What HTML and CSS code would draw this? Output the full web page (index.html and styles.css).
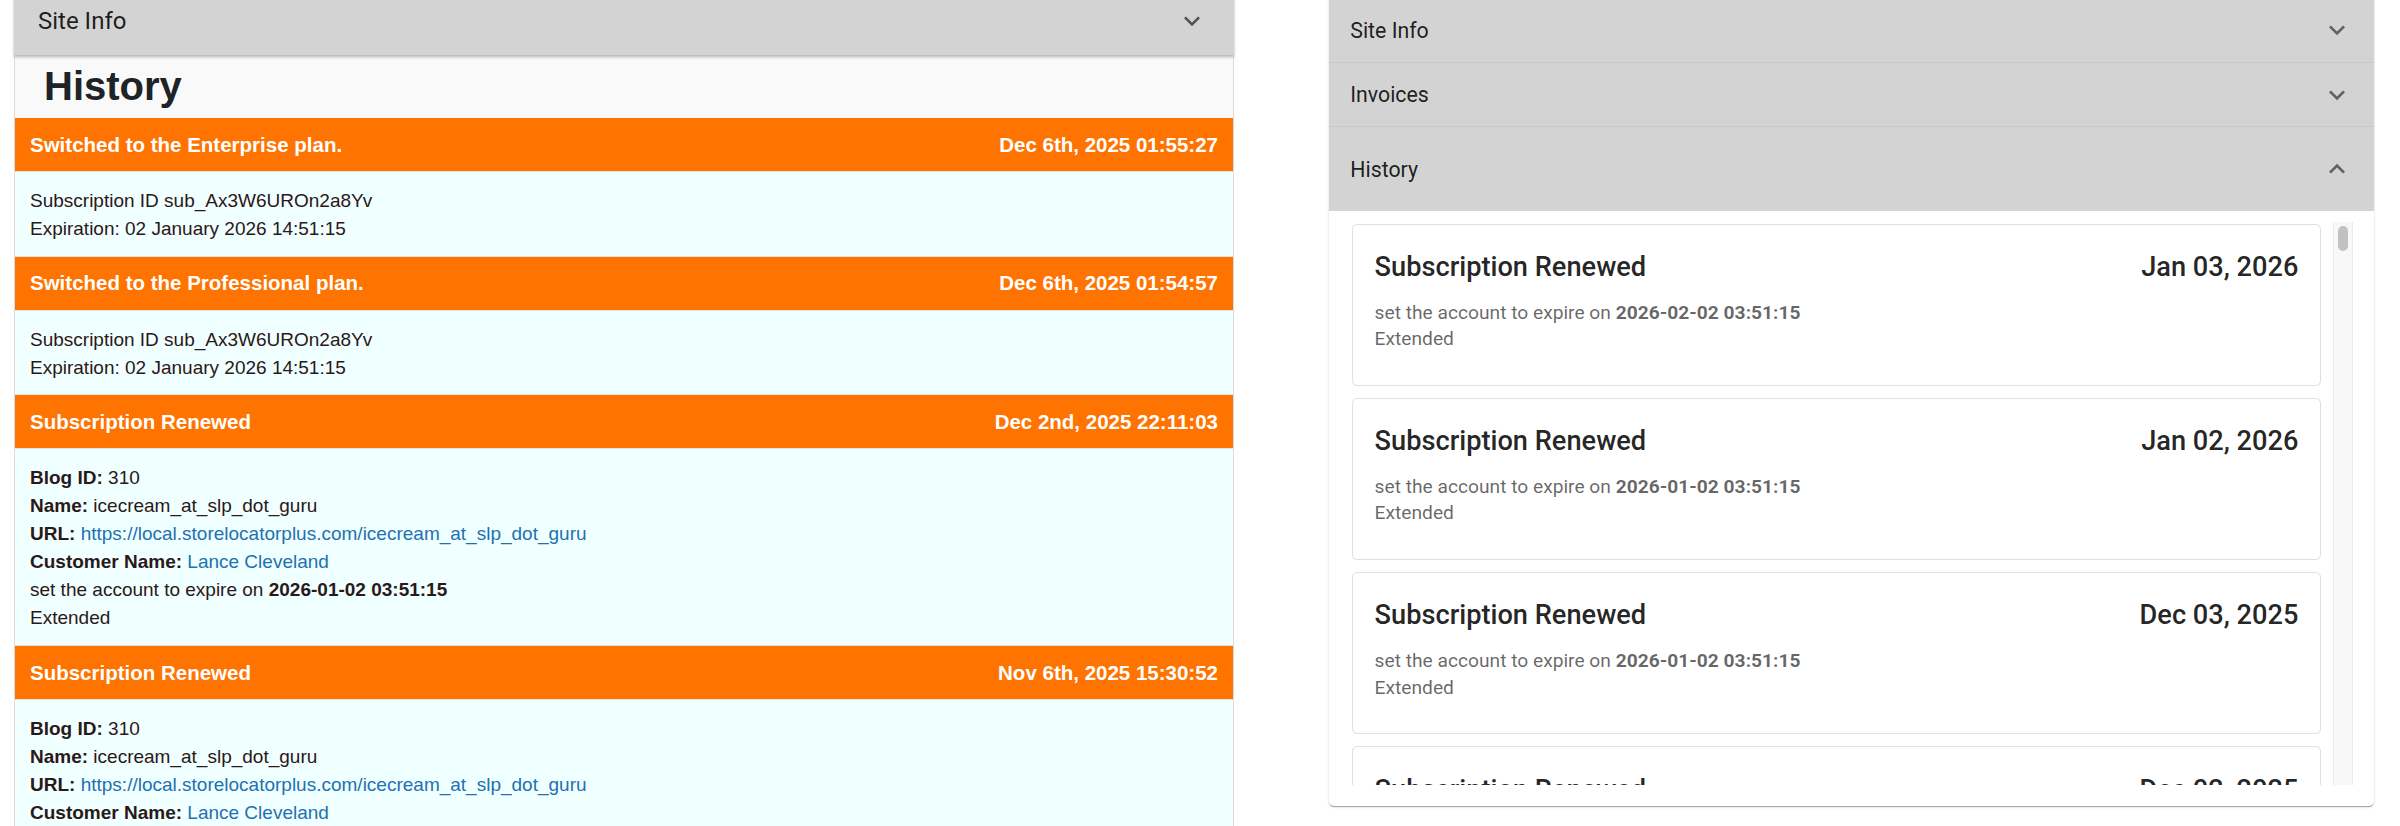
FILE: index.html
```html
<!DOCTYPE html>
<html lang="en">
<head>
<meta charset="utf-8">
<title>Subscription history</title>
<link rel="stylesheet" href="styles.css">
</head>
<body>
<div class="page">
  <section class="legacy">
    <div class="legacy-head">
      <span>Site Info</span>
      <svg class="chev" viewBox="0 0 24 24"><path d="M16.59 8.59 12 13.17 7.41 8.59 6 10l6 6 6-6z"/></svg>
    </div>
    <div class="legacy-body">
      <h1 class="legacy-title">History</h1>

      <div class="entry-head"><span>Switched to the Enterprise plan.</span><span>Dec 6th, 2025 01:55:27</span></div>
      <div class="entry-body">
        <div>Subscription ID sub_Ax3W6UROn2a8Yv</div>
        <div>Expiration: 02 January 2026 14:51:15</div>
      </div>

      <div class="entry-head"><span>Switched to the Professional plan.</span><span>Dec 6th, 2025 01:54:57</span></div>
      <div class="entry-body">
        <div>Subscription ID sub_Ax3W6UROn2a8Yv</div>
        <div>Expiration: 02 January 2026 14:51:15</div>
      </div>

      <div class="entry-head"><span>Subscription Renewed</span><span>Dec 2nd, 2025 22:11:03</span></div>
      <div class="entry-body">
        <div><b>Blog ID:</b> 310</div>
        <div><b>Name:</b> icecream_at_slp_dot_guru</div>
        <div><b>URL:</b> <a href="#">https://local.storelocatorplus.com/icecream_at_slp_dot_guru</a></div>
        <div><b>Customer Name:</b> <a href="#">Lance Cleveland</a></div>
        <div>set the account to expire on <b>2026-01-02 03:51:15</b></div>
        <div>Extended</div>
      </div>

      <div class="entry-head"><span>Subscription Renewed</span><span>Nov 6th, 2025 15:30:52</span></div>
      <div class="entry-body">
        <div><b>Blog ID:</b> 310</div>
        <div><b>Name:</b> icecream_at_slp_dot_guru</div>
        <div><b>URL:</b> <a href="#">https://local.storelocatorplus.com/icecream_at_slp_dot_guru</a></div>
        <div><b>Customer Name:</b> <a href="#">Lance Cleveland</a></div>
      </div>
    </div>
  </section>

  <section class="modern">
    <div class="acc">
      <div class="acc-sum"><span>Site Info</span><svg class="acc-chev" viewBox="0 0 24 24"><path d="M16.59 8.59 12 13.17 7.41 8.59 6 10l6 6 6-6z"/></svg></div>
    </div>
    <div class="acc">
      <div class="acc-sum"><span>Invoices</span><svg class="acc-chev" viewBox="0 0 24 24"><path d="M16.59 8.59 12 13.17 7.41 8.59 6 10l6 6 6-6z"/></svg></div>
    </div>
    <div class="acc acc-open">
      <div class="acc-sum"><span>History</span><svg class="acc-chev" viewBox="0 0 24 24"><path d="M16.59 8.59 12 13.17 7.41 8.59 6 10l6 6 6-6z"/></svg></div>
      <div class="acc-details">
        <div class="scroller">
          <div class="cards">
            <div class="card">
              <div class="card-head"><span>Subscription Renewed</span><span>Jan 03, 2026</span></div>
              <div class="card-text">set the account to expire on <b>2026-02-02 03:51:15</b><br>Extended</div>
            </div>
            <div class="card">
              <div class="card-head"><span>Subscription Renewed</span><span>Jan 02, 2026</span></div>
              <div class="card-text">set the account to expire on <b>2026-01-02 03:51:15</b><br>Extended</div>
            </div>
            <div class="card">
              <div class="card-head"><span>Subscription Renewed</span><span>Dec 03, 2025</span></div>
              <div class="card-text">set the account to expire on <b>2026-01-02 03:51:15</b><br>Extended</div>
            </div>
            <div class="card">
              <div class="card-head"><span>Subscription Renewed</span><span>Dec 02, 2025</span></div>
              <div class="card-text">set the account to expire on <b>2026-01-02 03:51:15</b><br>Extended</div>
            </div>
          </div>
          <div class="track"><div class="thumb"></div></div>
        </div>
      </div>
    </div>
  </section>
</div>
</body>
</html>
```
FILE: styles.css
```css
* { box-sizing: border-box; }
html, body { margin: 0; padding: 0; }
body {
  background: #fff;
  height: 826px;
  overflow: hidden;
  font-family: "Liberation Sans", Arial, sans-serif;
}
.page {
  display: flex;
  align-items: flex-start;
  gap: 95px;
  padding-left: 14px;
  height: 826px;
  overflow: hidden;
}

/* ---------- left (legacy) panel ---------- */
.legacy { width: 1220px; flex: none; }
.legacy-head {
  margin-top: -14px;
  height: 69px;
  background: #d3d3d3;
  display: flex;
  align-items: center;
  justify-content: space-between;
  padding: 0 26px 0 24px;
  box-shadow: 0 2px 3px rgba(0,0,0,.28);
  position: relative;
  z-index: 1;
  font-family: Roboto, "Liberation Sans", sans-serif;
  font-size: 24px;
  color: rgba(0,0,0,.87);
}
.chev { width: 32px; height: 32px; fill: #555; }
.legacy-body {
  background: #f9f9f9;
  border-left: 1px solid #dcdcdc;
  border-right: 1px solid #dcdcdc;
}
.legacy-title {
  margin: 0;
  height: 63px;
  line-height: 63px;
  padding-left: 29px;
  font-size: 40px;
  font-weight: bold;
  color: #1d2327;
}
.entry-head {
  height: 53px;
  display: flex;
  align-items: center;
  justify-content: space-between;
  padding: 0 15px;
  background: #ff7300;
  color: #fff;
  font-weight: bold;
  font-size: 20.5px;
}
.entry-body {
  background: #f0ffff;
  border-top: 1px solid #e2e2e2;
  border-bottom: 1px solid #e2e2e2;
  padding: 15px 15px 12.7px;
  font-size: 19px;
  line-height: 28px;
  color: #2b1818;
}
.entry-body a { color: #2271b1; text-decoration: none; }

/* ---------- right (MUI) panel ---------- */
.modern {
  width: 1045px;
  flex: none;
  margin-top: -2px;
  font-family: Roboto, "Liberation Sans", sans-serif;
  background: #fff;
  border-radius: 0 0 5px 5px;
  box-shadow: 0 2px 1px -1px rgba(0,0,0,.2), 0 1px 1px 0 rgba(0,0,0,.14), 0 1px 3px 0 rgba(0,0,0,.12);
  overflow: hidden;
}
.acc-sum {
  display: flex;
  align-items: center;
  justify-content: space-between;
  min-height: 64px;
  padding: 0 21.3px;
  background: #d3d3d3;
  font-size: 21.3px;
  color: rgba(0,0,0,.87);
}
.acc + .acc .acc-sum { border-top: 1px solid rgba(0,0,0,.05); }
.acc-open .acc-sum { min-height: 85.3px; }
.acc-chev { width: 32px; height: 32px; fill: rgba(0,0,0,.54); }
.acc-open .acc-chev { transform: rotate(180deg); }
.acc-details { padding: 10.7px 21.3px 21.3px; }
.scroller {
  display: flex;
  height: 563px;
}
.cards {
  flex: 1 1 auto;
  min-width: 0;
  overflow: hidden;
  display: flex;
  flex-direction: column;
  gap: 12px;
  padding: 2px 0 0 2px;
}
.card {
  flex: none;
  border: 1px solid rgba(0,0,0,.12);
  border-radius: 5.3px;
  padding: 21.3px 21.3px 32px;
  background: #fff;
}
.card-head {
  display: flex;
  justify-content: space-between;
  font-size: 27.2px;
  font-weight: 500;
  line-height: 42.7px;
  color: rgba(0,0,0,.87);
}
.card-text {
  margin-top: 10.7px;
  font-size: 19.2px;
  line-height: 26.7px;
  color: rgba(0,0,0,.6);
}
.card-text b { font-weight: 700; }
.track {
  flex: none;
  width: 20px;
  margin-left: 12px;
  background: #f8f8f8;
  border-left: 1px solid #ececec;
  border-right: 1px solid #ececec;
}
.thumb {
  width: 10px;
  height: 25px;
  margin: 4px auto 0;
  border-radius: 5px;
  background: #c1c1c1;
}
```
